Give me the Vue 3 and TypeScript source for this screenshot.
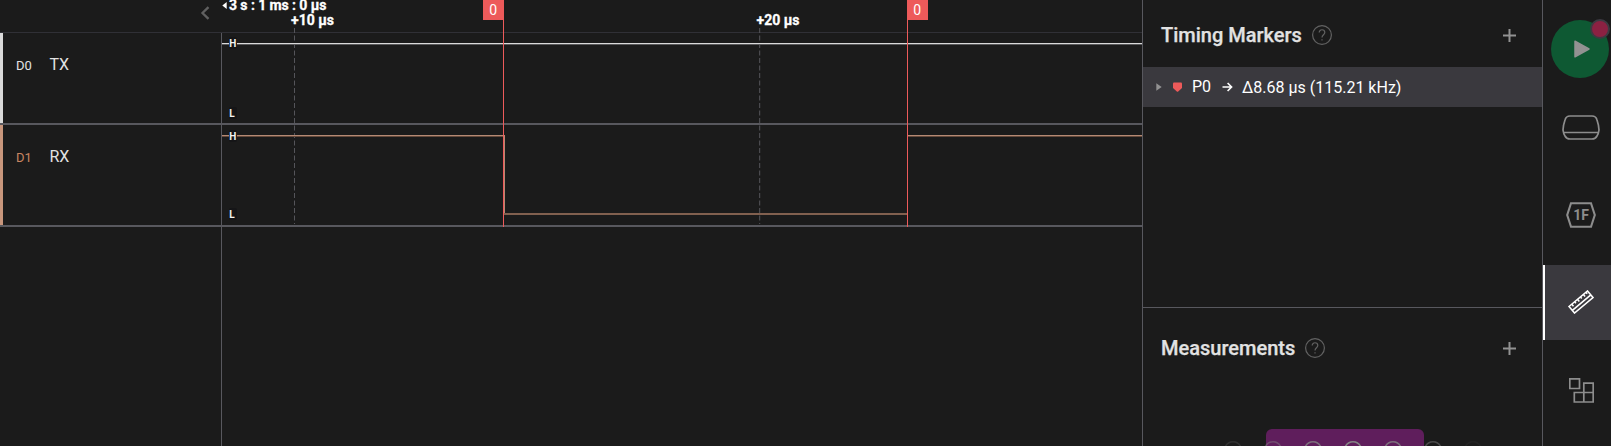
<script setup lang="ts">
interface Channel {
  id: string
  name: string
  tone: string
}

interface Section {
  title: string
  kind: string
}

const channels: Channel[] = [
  { id: 'D0', name: 'TX', tone: 'tx' },
  { id: 'D1', name: 'RX', tone: 'rx' },
]

const sections: Section[] = [
  { title: 'Timing Markers', kind: 'markers' },
  { title: 'Measurements', kind: 'measurements' },
]

const levels = [
  { text: 'H', y: 43 },
  { text: 'L', y: 113 },
  { text: 'H', y: 136 },
  { text: 'L', y: 214 },
]

const flags = [
  { line: 503, box: 483 },
  { line: 907, box: 907 },
]

const waves = [
  { x: 12, o: 0.2 },
  { x: 52, o: 0.45 },
  { x: 92, o: 0.8 },
  { x: 132, o: 1 },
  { x: 172, o: 0.8 },
  { x: 212, o: 0.45 },
  { x: 252, o: 0.08 },
]
</script>

<template>
  <div class="app">
    <aside class="channels">
      <div class="channels-head">
        <svg class="collapse" width="10" height="14" viewBox="0 0 10 14">
          <path d="M8.500 1.2 L2.500 7 L8.500 12.8" />
        </svg>
      </div>
      <div v-for="c in channels" :key="c.id" class="channel" :class="c.tone">
        <span class="channel-id">{{ c.id }}</span>
        <span class="channel-name">{{ c.name }}</span>
      </div>
      <div class="channels-rest"></div>
    </aside>

    <svg class="plot" width="920" height="446" viewBox="222 0 920 446">
      <g shape-rendering="crispEdges">
        <rect class="head-line" x="222" y="32" width="920" height="1" />
        <rect class="row-line" x="222" y="123" width="920" height="2" />
        <rect class="row-line" x="222" y="225" width="920" height="2" />
      </g>
      <path class="grid" d="M294.5 28 V123 M294.5 125.5 V224" />
      <path class="grid" d="M759.7 28 V123 M759.7 125.5 V224" />
      <g shape-rendering="crispEdges">
        <rect class="tx-hi" x="222" y="43" width="920" height="1" />
        <rect class="tx-lo" x="222" y="44" width="920" height="1" />
        <rect class="rx-hi" x="222" y="135" width="282" height="1" />
        <rect class="rx-lo" x="222" y="136" width="282" height="1" />
        <rect class="rx-hi" x="504" y="135" width="1" height="79" />
        <rect class="rx-mid" x="504" y="213" width="403" height="2" />
        <rect class="rx-hi" x="908" y="135" width="234" height="1" />
        <rect class="rx-lo" x="908" y="136" width="234" height="1" />
      </g>
      <g v-for="(l, i) in levels" :key="i">
        <rect class="level-bg" x="229" :y="l.y - 6" width="8" height="12" rx="2" />
        <text class="level" x="229.3" :y="l.y + 3.500">{{ l.text }}</text>
      </g>
      <path class="origin" d="M222.3 5.5 L226.7 2 V9 Z" />
      <text class="tick" x="229" y="10" textLength="97.5">3 s : 1 ms : 0 µs</text>
      <text class="tick" x="291" y="25" textLength="43">+10 µs</text>
      <text class="tick" x="756.5" y="25" textLength="43">+20 µs</text>
      <g v-for="f in flags" :key="f.line">
        <rect class="flag" :x="f.line" y="0" width="1" height="227" />
        <rect class="flag" :x="f.box" y="0" width="21" height="20" />
        <text class="flag-text" :x="f.box + 10.2" y="15">0</text>
      </g>
    </svg>

    <main class="panel">
      <section v-for="s in sections" :key="s.kind" class="section" :class="s.kind">
        <header class="section-head">
          <h2>{{ s.title }}</h2>
          <svg class="help" width="20" height="20" viewBox="0 0 20 20">
            <circle cx="10" cy="10" r="9.4" />
            <path d="M7.2 7.6 C7.2 3.7 12.8 3.9 12.8 7.5 C12.8 9.7 10 9.8 10 12.4 M10 14.3 V15.6" />
          </svg>
          <svg class="add" width="13" height="13" viewBox="0 0 13 13">
            <path d="M0 6.5 H13 M6.5 0 V13" />
          </svg>
        </header>

        <div v-if="s.kind === 'markers'" class="marker">
          <svg class="caret" width="6" height="8" viewBox="0 0 6 8"><path d="M0.3 0.3 L5.7 4 L0.3 7.7 Z" /></svg>
          <svg class="badge" width="9" height="10" viewBox="0 0 9 10">
            <path d="M1 0.5 H8 Q9 0.5 9 1.5 V6 L5.2 9.4 Q4.5 10 3.8 9.4 L0 6 V1.5 Q0 0.5 1 0.5 Z" />
          </svg>
          <span class="marker-name">P0</span>
          <svg class="arrow" width="11" height="10" viewBox="0 0 11 10">
            <path d="M0.5 5 H9.5 M5.6 1 L9.6 5 L5.6 9" />
          </svg>
          <span class="marker-value">Δ8.68 µs (115.21 kHz)</span>
        </div>

        <svg v-else class="empty-art" width="264" height="17" viewBox="0 0 264 17">
          <rect class="art-box" x="45" y="0" width="158" height="40" rx="6" />
          <path
            v-for="w in waves"
            :key="w.x"
            class="art-wave"
            :style="{ opacity: w.o }"
            :d="`M${w.x - 9} 21 C${w.x - 6} 10 ${w.x + 6} 10 ${w.x + 9} 21`"
          />
        </svg>
      </section>
    </main>

    <nav class="rail">
      <div class="run">
        <svg width="60" height="60" viewBox="0 0 60 60">
          <circle class="run-disc" cx="29" cy="31" r="29" />
          <path class="run-play" d="M24 23.2 L38 31 L24 38.8 Z" />
          <circle class="run-dot" cx="49" cy="11" r="9" />
        </svg>
      </div>
      <div class="rail-item device">
        <svg width="38" height="25" viewBox="0 0 38 25">
          <path d="M8 1 H30 Q34 1 35 5 Q36.8 10 37 15 Q36.5 19 35 21 Q33.5 24 30 24 H8 Q4.500 24 3 21 Q1.500 19 1 15 Q1.200 10 3 5 Q4 1 8 1 Z M2 17.5 H36" />
        </svg>
      </div>
      <div class="rail-item analyzers">
        <svg width="30" height="26" viewBox="0 0 30 26">
          <path d="M5 1.200 H25 L28.800 13 L25 24.800 H5 L1.200 13 Z" />
          <text x="15" y="18">1F</text>
        </svg>
      </div>
      <div class="rail-item ruler active">
        <svg width="26" height="24" viewBox="0 0 26 24">
          <path d="M1 16.500 L19.500 1 L25 7.500 L6.500 23 Z M4.700 20.200 L22.800 4.900" />
          <path d="M3.800 14.200 L5.500 16.200 M6.700 11.800 L7.900 13.200 M9.600 9.400 L11.300 11.400 M12.500 7 L13.700 8.400 M15.400 4.500 L17.100 6.500 M18 2.300 L19.200 3.700" />
        </svg>
      </div>
      <div class="rail-item extensions">
        <svg width="25" height="25" viewBox="0 0 25 25">
          <path d="M0.800 0.800 H10.500 V10.500 H0.800 Z M5.300 14.500 H24.200 V24 H5.300 Z M14.800 24 V5.200 H24.200 V14.500" />
        </svg>
      </div>
    </nav>
  </div>
</template>

<style>
html,
body {
  background: #1b1b1b;
  overflow: hidden;
}
</style>

<style scoped>
.app {
  display: flex;
  width: 1611px;
  height: 446px;
  overflow: hidden;
  background: #1b1b1b;
  color: #e2e2e2;
  font-family: Roboto, 'Liberation Sans', sans-serif;
}
.app * {
  box-sizing: border-box;
}
svg {
  display: block;
  flex: none;
  fill: none;
}
.channels {
  display: flex;
  flex: none;
  flex-direction: column;
  width: 222px;
}
.channels-head {
  display: flex;
  justify-content: flex-end;
  height: 33px;
  padding: 6px 12px 0 0;
  border-bottom: 1px solid #303036;
}
.collapse path {
  stroke: #606060;
  stroke-width: 2.3;
}
.channel {
  display: flex;
  align-items: baseline;
  border-right: 1px solid #58585e;
  padding: 22px 0 0 16px;
  position: relative;
}
.channel::before {
  content: '';
  position: absolute;
  inset: 0 auto 0 0;
  width: 3px;
  background: #dadada;
}
.channel::after {
  content: '';
  position: absolute;
  inset: auto -1px -2px 0;
  height: 2px;
  background: #58585e;
}
.tx {
  height: 90px;
  margin-bottom: 2px;
}
.rx {
  height: 100px;
  margin-bottom: 2px;
}
.rx::before {
  background: #c8967c;
}
.channel-id {
  width: 33.5px;
  font-size: 13px;
  line-height: 20px;
}
.rx .channel-id {
  color: #c98561;
}
.channel-name {
  font-size: 16px;
  line-height: 20px;
}
.channels-rest {
  flex: 1;
  border-right: 1px solid #58585e;
}
.head-line {
  fill: #303036;
}
.row-line {
  fill: #58585e;
}
.grid {
  stroke: #55555a;
  stroke-width: 1;
  stroke-dasharray: 5 2.5;
}
.tx-hi {
  fill: #dadada;
}
.tx-lo {
  fill: #59595b;
}
.rx-hi {
  fill: #b58a74;
}
.rx-lo {
  fill: #65493b;
}
.rx-mid {
  fill: #81604f;
}
.level-bg {
  fill: #151517;
}
.level {
  fill: #f2f2f2;
  font-size: 10px;
  font-weight: 700;
}
.origin {
  fill: #fff;
}
.tick {
  fill: #fff;
  stroke: #fff;
  stroke-width: 0.3px;
  font-size: 14px;
  font-weight: 700;
}
.flag {
  fill: #ed5a5a;
}
.flag-text {
  fill: #fff;
  font-size: 14px;
  text-anchor: middle;
}
.panel {
  flex: none;
  width: 400px;
  border-left: 1px solid #58585e;
}
.markers {
  height: 308px;
  border-bottom: 1px solid #58585e;
}
.section-head {
  display: flex;
  align-items: center;
  height: 67px;
  padding: 3px 26px 0 18px;
}
.measurements .section-head {
  height: 77px;
}
h2 {
  margin: 0;
  font-size: 20px;
  font-weight: 500;
  line-height: 24px;
  -webkit-text-stroke: 0.25px currentColor;
}
.help {
  margin-left: 10px;
}
.help circle,
.help path {
  stroke: #626262;
  stroke-width: 1.2;
}
.add {
  margin-left: auto;
}
.add path {
  stroke: #929292;
  stroke-width: 2;
}
.marker {
  display: flex;
  align-items: center;
  height: 40px;
  padding-left: 13px;
  background: #3a393e;
  color: #fff;
  font-size: 16px;
}
.caret {
  fill: #929292;
}
.badge {
  margin-left: 11px;
  fill: #ed5a5a;
}
.marker-name {
  width: 20px;
  margin-left: 10px;
  padding-bottom: 1px;
}
.arrow {
  margin-left: 10px;
}
.arrow path {
  stroke: #fff;
  stroke-width: 1.6;
}
.marker-value {
  margin-left: 9px;
  white-space: nowrap;
}
.empty-art {
  margin: 44px 0 0 78px;
}
.art-box {
  fill: #5f1e5c;
}
.art-wave {
  stroke: #858585;
  stroke-width: 1.5;
}
.rail {
  display: flex;
  flex: none;
  flex-direction: column;
  width: 69px;
  border-left: 1px solid #58585e;
}
.run {
  height: 90px;
  padding: 18px 0 0 8px;
}
.run-disc {
  fill: #0e5933;
}
.run-play {
  fill: #929292;
  stroke: #929292;
  stroke-width: 1.5;
  stroke-linejoin: round;
}
.run-dot {
  fill: #8b2142;
  stroke: #3d3a42;
  stroke-width: 2;
}
.rail-item {
  display: flex;
  align-items: center;
  justify-content: center;
  height: 75px;
  padding-left: 8px;
}
.rail-item path {
  stroke: #8d8d8d;
  stroke-width: 1.7;
}
.analyzers {
  margin-top: 13px;
  padding-bottom: 1px;
}
.analyzers .rail-item path,
.analyzers path {
  stroke-width: 2.1;
}
.analyzers text {
  fill: #8d8d8d;
  font-size: 14px;
  font-weight: 700;
  text-anchor: middle;
}
.ruler {
  margin-top: 12px;
}
.active {
  padding-left: 6px;
  padding-bottom: 1px;
  border-left: 2px solid #fff;
  background: #3a393e;
}
.ruler path {
  stroke: #fff;
  stroke-width: 1.6;
}
.extensions {
  margin-top: 13px;
}
</style>
